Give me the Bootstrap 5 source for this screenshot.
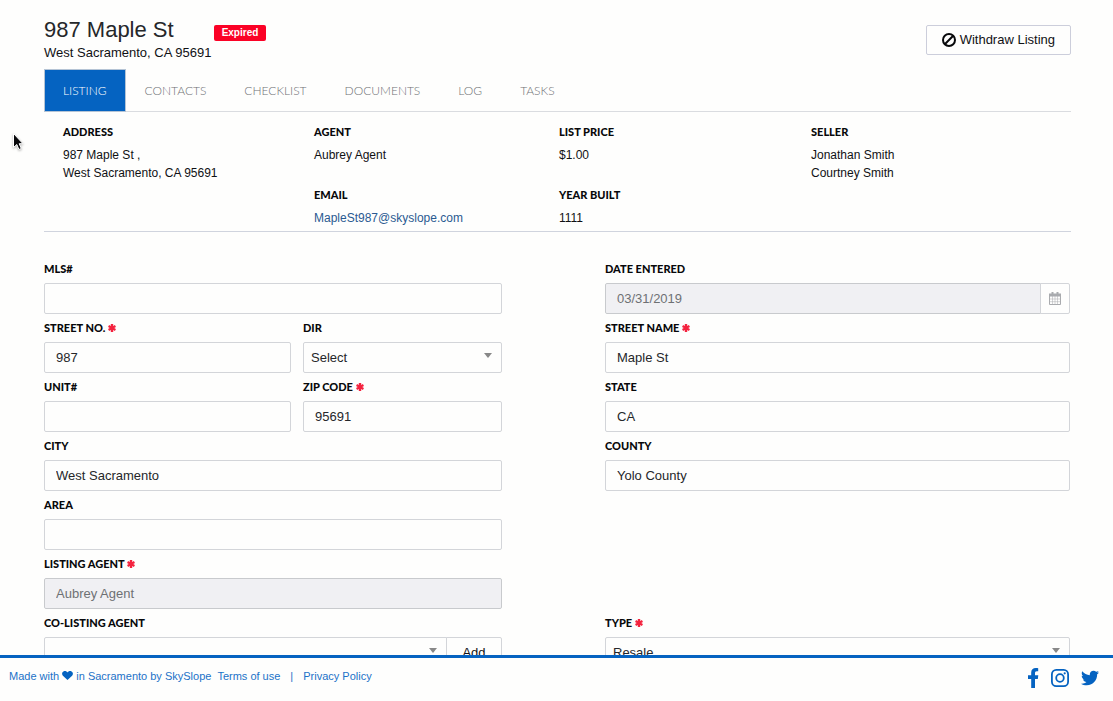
<!DOCTYPE html>
<html lang="en">
<head>
<meta charset="utf-8">
<meta name="viewport" content="width=device-width, initial-scale=1">
<title>987 Maple St - Listing</title>
<link href="https://cdn.jsdelivr.net/npm/bootstrap@5.3.0/dist/css/bootstrap.min.css" rel="stylesheet">
<style>
  :root { --brand: #0563c1; --line: #d3d5d9; --paper: #fefefd; }
  body { font-family: "Liberation Sans", Arial, sans-serif; font-size: 13px; line-height: 18px; color: #101114; background: var(--paper); }
  .page-main { overflow-y: auto; scrollbar-width: none; min-height: 0; padding: 16px 42px 0 44px; }
  .page-main::-webkit-scrollbar { display: none; }
  .listing-title { font-size: 22px; line-height: 28px; color: #25272a; }
  .status-badge { font-size: 10px; line-height: 16px; padding: 0 8px; background: #fb0226; border-radius: 2px; margin: 9px 0 0 40px; }
  .plain-btn { --bs-btn-font-size: 13px; --bs-btn-line-height: 18px; --bs-btn-color: #101114; --bs-btn-bg: var(--paper); --bs-btn-border-color: #cccedb; --bs-btn-border-radius: 2px; --bs-btn-hover-color: #101114; --bs-btn-hover-bg: #f0f0f3; --bs-btn-hover-border-color: #b9bccb; }
  .withdraw-btn { --bs-btn-padding-y: 5px; --bs-btn-padding-x: 15px; margin-top: 9px; }
  .listing-tabs { --bs-nav-tabs-border-color: #dadce0; --bs-nav-tabs-border-radius: 0; margin-top: 7px; }
  .listing-tabs .nav-link { --bs-nav-link-padding-x: 18px; --bs-nav-link-padding-y: 11px; --bs-nav-link-color: #6f7175; --bs-nav-tabs-link-active-color: #fff; --bs-nav-tabs-link-active-bg: var(--brand); --bs-nav-tabs-link-active-border-color: #b5c4d5; font: 300 12px/19px Lato, sans-serif; }
  .summary { grid-template-columns: 251fr 245fr 252fr 260fr; padding: 11px 0 4px 19px; border-bottom: 1px solid #d0d4de; font-size: 12px; row-gap: 22px; }
  .summary dt, .field-label { font: 900 11px/18px Lato, sans-serif; color: #08090b; }
  .summary dt { margin-bottom: 5px; }
  .summary dd { margin: 0; }
  .summary .seller, .summary .address { grid-row: span 2; }
  .summary a { color: #2a5a91; }
  .form-area { grid-template-columns: 458fr 465fr; column-gap: 103px; row-gap: 6px; padding: 29px 1px 0 0; }
  .form-area .left-field { grid-column: 1; }
  .form-area .type-field { grid-column: 2; grid-row: 7; }
  .split { grid-template-columns: 247fr 199fr; column-gap: 12px; }
  .form-area .field-label { display: block; line-height: 16px; margin-bottom: 6px; }
  .field-label svg { width: 8px; height: 8px; vertical-align: 0; fill: #f4233f; }
  .box { height: 31px; font-size: 13px; line-height: 18px; padding: 5px 11px; color: #25272a; background-color: var(--paper); border-color: var(--line); border-radius: 2px; }
  .box:disabled { background-color: #f0f0f3; color: #6e7073; border-color: #c8cacd; }
  .form-select.box { padding: 5px 24px 5px 7px; background-image: url("data:image/svg+xml,%3Csvg xmlns='http://www.w3.org/2000/svg' viewBox='0 0 8 5'%3E%3Cpath fill='%23888' d='M0 0h8L4 5z'/%3E%3C/svg%3E"); background-size: 8px 5px; background-position: right 9px top 10px; }
  .cal-btn { width: 30px; --bs-btn-padding-x: 0; --bs-btn-padding-y: 0; --bs-btn-border-color: var(--line); }
  .add-btn { width: 56px; --bs-btn-padding-x: 0; --bs-btn-padding-y: 5px; --bs-btn-border-color: var(--line); }
  .page-foot { border-top: 3px solid var(--brand); padding: 0 14px 4px 9px; height: 46px; font-size: 11px; color: #1c72c8; background: var(--paper); }
  .page-foot a { color: #1c72c8; }
  .page-foot svg { fill: var(--brand); }
  .foot-links { gap: 6px; padding-bottom: 3px; }
  .foot-links svg { vertical-align: 0; }
  .pointer { position: absolute; left: 12px; top: 132px; filter: drop-shadow(0 1px 1px rgba(0,0,0,.3)); pointer-events: none; }
</style>
</head>
<body class="vh-100 d-flex flex-column overflow-hidden position-relative">
<svg class="d-none">
  <symbol id="star" viewBox="0 0 8 8"><path d="M2.800 0h2.400v1.900L6.900 1 8 3 6.200 4 8 5 6.900 7 5.200 6.100V8H2.800V6.100L1.100 7 0 5 1.800 4 0 3 1.100 1 2.800 1.900z"/></symbol>
</svg>

<main class="page-main flex-grow-1">
  <header class="d-flex justify-content-between align-items-start">
    <div>
      <div class="d-flex align-items-start">
        <h1 class="listing-title fw-normal mb-0">987 Maple St</h1>
        <span class="badge status-badge">Expired</span>
      </div>
      <div>West Sacramento, CA 95691</div>
    </div>
    <button type="button" class="btn plain-btn withdraw-btn d-flex align-items-center gap-1">
      <svg width="14" height="14" viewBox="0 0 14 14" fill="none" stroke="#08090b" stroke-width="2" aria-hidden="true"><circle cx="7" cy="7" r="6"/><path d="M2.800 11.200L11.200 2.800"/></svg>
      Withdraw Listing
    </button>
  </header>

  <nav>
    <ul class="nav nav-tabs listing-tabs">
      <li class="nav-item"><a class="nav-link active" aria-current="page" href="#">LISTING</a></li>
      <li class="nav-item"><a class="nav-link" href="#">CONTACTS</a></li>
      <li class="nav-item"><a class="nav-link" href="#">CHECKLIST</a></li>
      <li class="nav-item"><a class="nav-link" href="#">DOCUMENTS</a></li>
      <li class="nav-item"><a class="nav-link" href="#">LOG</a></li>
      <li class="nav-item"><a class="nav-link" href="#">TASKS</a></li>
    </ul>
  </nav>

  <dl class="summary d-grid mb-0">
    <div class="address"><dt>ADDRESS</dt><dd>987 Maple St ,</dd><dd>West Sacramento, CA 95691</dd></div>
    <div><dt>AGENT</dt><dd>Aubrey Agent</dd></div>
    <div><dt>LIST PRICE</dt><dd>$1.00</dd></div>
    <div class="seller"><dt>SELLER</dt><dd>Jonathan Smith</dd><dd>Courtney Smith</dd></div>
    <div><dt>EMAIL</dt><dd><a class="text-decoration-none" href="mailto:MapleSt987@skyslope.com">MapleSt987@skyslope.com</a></dd></div>
    <div><dt>YEAR BUILT</dt><dd>1111</dd></div>
  </dl>

  <form class="form-area d-grid">
    <div><label class="field-label" for="mls">MLS#</label><input id="mls" class="form-control box" type="text"></div>
    <div>
      <label class="field-label" for="entered">DATE ENTERED</label>
      <div class="input-group">
        <input id="entered" class="form-control box" type="text" value="03/31/2019" disabled>
        <button type="button" class="btn plain-btn cal-btn d-flex align-items-center justify-content-center" aria-label="Open calendar">
          <svg width="12" height="13" viewBox="0 0 12 13" fill="none" stroke="#a9abae" aria-hidden="true"><path d="M.5 2.500h11v10H.5z"/><path d="M0 3h12" stroke-width="3"/><path d="M3.500 0v3M8.500 0v3" stroke-width="2"/><path d="M3.500 4v8M6 4v8M8.500 4v8M1 7h10M1 9.700h10" stroke-width=".5"/></svg>
        </button>
      </div>
    </div>

    <div class="split d-grid">
      <div><label class="field-label" for="number">STREET NO. <svg aria-hidden="true"><use href="#star"/></svg></label><input id="number" class="form-control box" type="text" value="987"></div>
      <div><label class="field-label" for="dir">DIR</label><select id="dir" class="form-select box"><option>Select</option></select></div>
    </div>
    <div><label class="field-label" for="street">STREET NAME <svg aria-hidden="true"><use href="#star"/></svg></label><input id="street" class="form-control box" type="text" value="Maple St"></div>

    <div class="split d-grid">
      <div><label class="field-label" for="unit">UNIT#</label><input id="unit" class="form-control box" type="text"></div>
      <div><label class="field-label" for="zip">ZIP CODE <svg aria-hidden="true"><use href="#star"/></svg></label><input id="zip" class="form-control box" type="text" value="95691"></div>
    </div>
    <div><label class="field-label" for="state">STATE</label><input id="state" class="form-control box" type="text" value="CA"></div>

    <div><label class="field-label" for="city">CITY</label><input id="city" class="form-control box" type="text" value="West Sacramento"></div>
    <div><label class="field-label" for="county">COUNTY</label><input id="county" class="form-control box" type="text" value="Yolo County"></div>

    <div class="left-field"><label class="field-label" for="area">AREA</label><input id="area" class="form-control box" type="text"></div>
    <div class="left-field"><label class="field-label" for="agent">LISTING AGENT <svg aria-hidden="true"><use href="#star"/></svg></label><input id="agent" class="form-control box" type="text" value="Aubrey Agent" disabled></div>
    <div class="left-field">
      <label class="field-label" for="coagent">CO-LISTING AGENT</label>
      <div class="input-group">
        <select id="coagent" class="form-select box"><option></option></select>
        <button type="button" class="btn plain-btn add-btn">Add</button>
      </div>
    </div>
    <div class="type-field"><label class="field-label" for="type">TYPE <svg aria-hidden="true"><use href="#star"/></svg></label><select id="type" class="form-select box"><option>Resale</option></select></div>
  </form>
</main>

<footer class="page-foot d-flex justify-content-between flex-shrink-0">
  <div class="foot-links d-flex align-items-center">
    <span>Made with <svg width="11" height="9" viewBox="0 0 11 9" aria-hidden="true"><path d="M5.500 9L.9 4.800C-.5 3.200 0 .9 1.800.2 3.300-.3 4.700.3 5.500 1.500 6.300.3 7.700-.3 9.200.2 11 .9 11.500 3.200 10.100 4.800z"/></svg> in Sacramento by SkySlope</span>
    <a class="text-decoration-none" href="#">Terms of use</a>
    <span class="px-1">|</span>
    <a class="text-decoration-none" href="#">Privacy Policy</a>
  </div>
  <div class="d-flex align-items-center gap-2">
    <a class="d-flex px-1" href="#" aria-label="Facebook"><svg width="11" height="20" viewBox="0 0 11 20"><path d="M3.200 20V11H0V7.300h3.200V4.500C3.200 1.500 5 0 7.700 0c1.200 0 2.500.2 2.500.2v3H8.800c-1.400 0-1.800.9-1.800 1.800v2.300h3.300L9.800 11H7v9z"/></svg></a>
    <a class="d-flex" href="#" aria-label="Instagram"><svg width="18" height="18" viewBox="0 0 18 18"><g fill="none" stroke="#0563c1" stroke-width="1.800"><rect x=".9" y=".9" width="16.200" height="16.200" rx="4.400"/><circle cx="9" cy="9" r="3.800"/></g><circle cx="13.700" cy="4.300" r="1.100"/></svg></a>
    <a class="d-flex ms-1" href="#" aria-label="Twitter"><svg width="18" height="18" viewBox="0 0 512 512"><path d="M459.370 151.716c.325 4.548.325 9.097.325 13.645 0 138.720-105.583 298.558-298.558 298.558-59.452 0-114.680-17.219-161.137-47.106 8.447.974 16.568 1.299 25.340 1.299 49.055 0 94.213-16.568 130.274-44.832-46.132-.975-84.792-31.188-98.112-72.772 6.498.974 12.995 1.624 19.818 1.624 9.421 0 18.843-1.300 27.614-3.573-48.081-9.747-84.143-51.980-84.143-102.985v-1.299c13.969 7.797 30.214 12.670 47.431 13.319-28.264-18.843-46.781-51.005-46.781-87.391 0-19.492 5.197-37.360 14.294-52.954 51.655 63.675 129.300 105.258 216.365 109.807-1.624-7.797-2.599-15.918-2.599-24.040 0-57.828 46.782-104.934 104.934-104.934 30.213 0 57.502 12.670 76.670 33.137 23.715-4.548 46.456-13.320 66.599-25.340-7.798 24.366-24.366 44.833-46.132 57.827 21.117-2.273 41.584-8.122 60.426-16.243-14.292 20.791-32.161 39.308-52.628 54.253z"/></svg></a>
  </div>
</footer>

<svg class="pointer" width="12" height="19" viewBox="0 0 12 19" aria-hidden="true"><path d="M1.500 1.500v14l3.300-3 2.100 5 2.400-1-2.100-4.800h3.800z" fill="#08090b" stroke="#fff"/></svg>
<script src="https://cdn.jsdelivr.net/npm/bootstrap@5.3.0/dist/js/bootstrap.bundle.min.js"></script>
</body>
</html>
